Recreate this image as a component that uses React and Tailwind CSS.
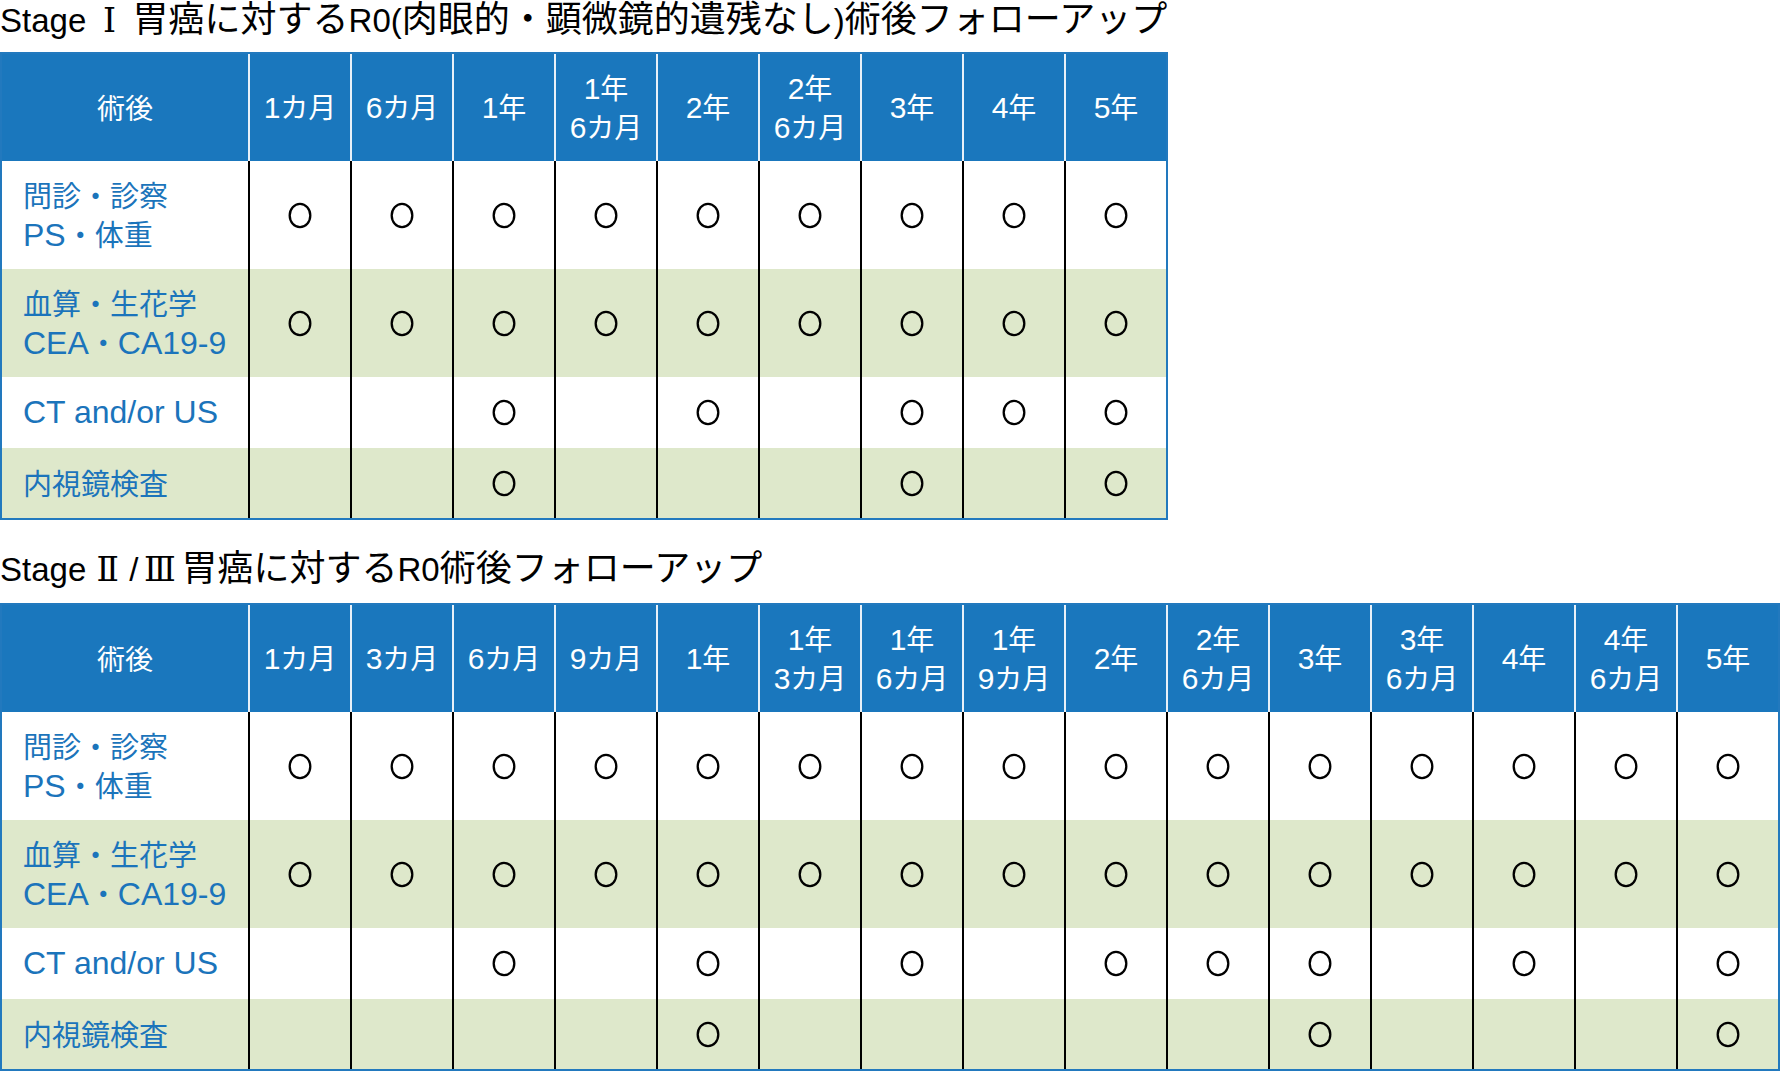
import React from "react";

const FONT = { fontFamily: '"Liberation Sans", "Noto Sans CJK JP", sans-serif' };
const CJK = { fontFamily: '"Noto Sans CJK JP", sans-serif' };
const ROMAN = { fontFamily: '"DejaVu Serif", "Liberation Serif", "Noto Sans CJK JP", serif' };

function Circle() {
  return (
    <svg width="24" height="27" viewBox="0 0 24 27">
      <ellipse cx="12" cy="13.5" rx="10.3" ry="11.6" fill="none" stroke="#000" strokeWidth="2.3" />
    </svg>
  );
}

// split a string into ASCII runs, roman numerals and other runs
function split(str) {
  const parts = [];
  const re = /([\x20-\x7e]+)|([\u2160-\u216b])|([^\x20-\x7e\u2160-\u216b]+)/g;
  let m;
  while ((m = re.exec(str))) {
    parts.push({ kind: m[1] ? "a" : m[2] ? "r" : "c", text: m[0] });
  }
  return parts;
}

function Mixed({ text, latinClass, cjkClass }) {
  return (
    <>
      {split(text).map((p, i) =>
        p.kind === "a" ? (
          <span key={i} className={latinClass}>
            {p.text}
          </span>
        ) : p.kind === "r" ? (
          <span
            key={i}
            className={`inline-block text-center text-[33px] ${p.text === "Ⅰ" ? "w-[28px]" : "w-[43px]"}`}
            style={ROMAN}
          >
            {p.text}
          </span>
        ) : (
          <span key={i} className={cjkClass} style={CJK}>
            {p.text}
          </span>
        )
      )}
    </>
  );
}

function Table({ cols, rows }) {
  return (
    <div className="w-fit border-2 border-[#2279be]">
      <div className="flex h-[107px] bg-[#1a77bd] text-white text-[28px]">
        <div className="w-[246px] flex items-center justify-center leading-[37px]">
          <span style={CJK} className="text-[28px]">術後</span>
        </div>
        {cols.map((c, i) => (
          <div
            key={i}
            className="w-[102px] border-l-2 border-[#e8f0f8] flex flex-col items-center justify-center leading-[37px]"
          >
            {c.map((line, j) => (
              <span key={j} className="whitespace-nowrap">
                <Mixed text={line} latinClass="text-[30px]" cjkClass="text-[28px]" />
              </span>
            ))}
          </div>
        ))}
      </div>
      {rows.map((r, ri) => (
        <div key={ri} className={`flex ${r.h} ${ri % 2 === 1 ? "bg-[#dee8cb]" : "bg-white"}`}>
          <div className="w-[246px] flex flex-col justify-center pl-[21px] text-[#1b74bb] text-[29px] leading-[36px]">
            {r.label.map((l, j) => (
              <span key={j} className="whitespace-nowrap">
                <Mixed text={l} latinClass="text-[32px]" cjkClass="text-[29px]" />
              </span>
            ))}
          </div>
          {cols.map((c, ci) => (
            <div key={ci} className="w-[102px] border-l-2 border-black flex items-center justify-center">
              {r.marks.includes(ci) ? <Circle /> : null}
            </div>
          ))}
        </div>
      ))}
    </div>
  );
}

const all = (n) => Array.from({ length: n }, (_, i) => i);

const cols1 = [
  ["1カ月"],
  ["6カ月"],
  ["1年"],
  ["1年", "6カ月"],
  ["2年"],
  ["2年", "6カ月"],
  ["3年"],
  ["4年"],
  ["5年"],
];

const rows1 = [
  { label: ["問診・診察", "PS・体重"], marks: all(9), h: "h-[108px]" },
  { label: ["血算・生花学", "CEA・CA19-9"], marks: all(9), h: "h-[108px]" },
  { label: ["CT and/or US"], marks: [2, 4, 6, 7, 8], h: "h-[71px]" },
  { label: ["内視鏡検査"], marks: [2, 6, 8], h: "h-[70px]" },
];

const cols2 = [
  ["1カ月"],
  ["3カ月"],
  ["6カ月"],
  ["9カ月"],
  ["1年"],
  ["1年", "3カ月"],
  ["1年", "6カ月"],
  ["1年", "9カ月"],
  ["2年"],
  ["2年", "6カ月"],
  ["3年"],
  ["3年", "6カ月"],
  ["4年"],
  ["4年", "6カ月"],
  ["5年"],
];

const rows2 = [
  { label: ["問診・診察", "PS・体重"], marks: all(15), h: "h-[108px]" },
  { label: ["血算・生花学", "CEA・CA19-9"], marks: all(15), h: "h-[108px]" },
  { label: ["CT and/or US"], marks: [2, 4, 6, 8, 9, 10, 12, 14], h: "h-[71px]" },
  { label: ["内視鏡検査"], marks: [4, 10, 14], h: "h-[70px]" },
];

export default function App() {
  return (
    <div className="w-[1781px] h-[1071px] bg-white overflow-hidden" style={FONT}>
      <div className="h-[52px] text-[33px] leading-[32px] text-black whitespace-nowrap">
        <Mixed
          text="Stage Ⅰ 胃癌に対するR0(肉眼的・顕微鏡的遺残なし)術後フォローアップ"
          latinClass="text-[33px]"
          cjkClass="text-[36px]"
        />
      </div>
      <Table cols={cols1} rows={rows1} />
      <div className="mt-[29px] h-[54px] text-[33px] leading-[32px] text-black whitespace-nowrap">
        <Mixed text="StageⅡ/Ⅲ胃癌に対するR0術後フォローアップ" latinClass="text-[33px]" cjkClass="text-[36px]" />
      </div>
      <Table cols={cols2} rows={rows2} />
    </div>
  );
}
